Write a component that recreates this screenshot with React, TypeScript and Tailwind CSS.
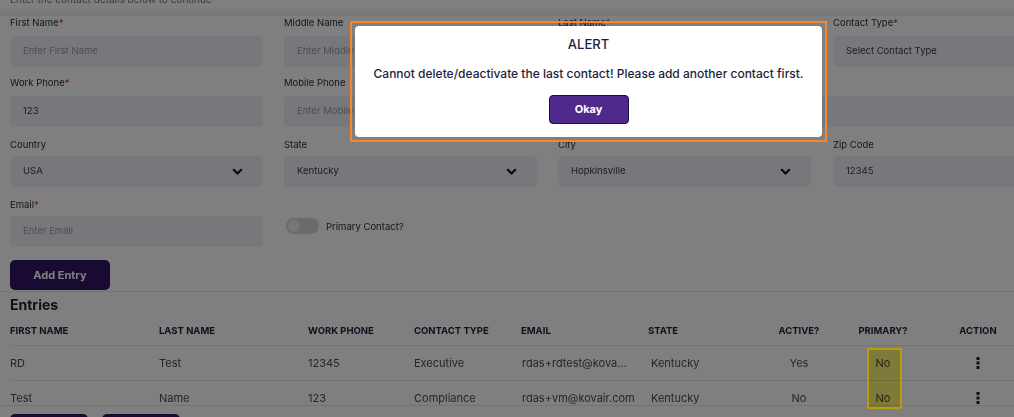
import React from "react";

const Chevron = () => (
  <svg width="11" height="8" viewBox="0 0 11 8" className="shrink-0">
    <path d="M1.8 1.8l3.7 3.7 3.7-3.7" fill="none" stroke="#111" strokeWidth="2.2" strokeLinecap="round" strokeLinejoin="round" />
  </svg>
);

const Dots = () => (
  <svg width="4" height="12" viewBox="0 0 4 12">
    <rect x="0.5" y="0" width="3" height="3" fill="#1e1e3c" />
    <rect x="0.5" y="4.5" width="3" height="3" fill="#1e1e3c" />
    <rect x="0.5" y="9" width="3" height="3" fill="#1e1e3c" />
  </svg>
);

function Label({ text, req }: { text: string; req?: boolean }) {
  return (
    <div className="h-[14px] leading-[14px] text-[9.5px] text-[#2b2b3b] mb-[6px] whitespace-nowrap">
      {text}
      {req && <span className="text-[#d0242b]">*</span>}
    </div>
  );
}

function Input({ ph, value }: { ph?: string; value?: string }) {
  return (
    <div className="h-[31px] rounded-[5px] bg-[#eef0f8] flex items-center pl-[13px] text-[9.5px]">
      {value ? <span className="text-[#3a3a48]">{value}</span> : <span className="text-[#9a9aaa]">{ph}</span>}
    </div>
  );
}

function Select({ value }: { value: string }) {
  return (
    <div className="h-[31px] rounded-[5px] bg-[#eef0f8] flex items-center justify-between pl-[13px] pr-[20px] text-[9.5px]">
      <span className="text-[#3a3a48]">{value}</span>
      <Chevron />
    </div>
  );
}

const cols = "grid grid-cols-[149px_149px_106px_107px_127px_112px_78px_90px_100px]";

const rows = [
  ["RD", "Test", "12345", "Executive", "rdas+rdtest@kova...", "Kentucky", "Yes", "No"],
  ["Test", "Name", "123", "Compliance", "rdas+vm@kovair.com", "Kentucky", "No", "No"],
];

export default function App() {
  return (
    <div className="relative w-[1014px] h-[417px] overflow-hidden bg-white font-['Inter',sans-serif] flex flex-col">
      <div className="flex-1 min-h-0 overflow-hidden">
        <div className="h-[9px] overflow-hidden">
          <p className="text-[10px] leading-[12px] text-[#777] -mt-[7px] px-[10px] whitespace-nowrap">
            Enter the contact details below to continue
          </p>
        </div>
        <div className="h-[7px] bg-[#f3f4f9]" />
        <div className="px-[10px] w-[1100px]">
          <div className="grid grid-cols-[253px_253px_253px_253px] gap-x-[21px] gap-y-[9px]">
            <div>
              <Label text="First Name" req />
              <Input ph="Enter First Name" />
            </div>
            <div>
              <Label text="Middle Name" />
              <Input ph="Enter Middle Name" />
            </div>
            <div>
              <Label text="Last Name" req />
              <Input ph="Enter Last Name" />
            </div>
            <div className="pl-[1px]">
              <Label text="Contact Type" req />
              <Input value="Select Contact Type" />
            </div>

            <div>
              <Label text="Work Phone" req />
              <Input value="123" />
            </div>
            <div>
              <Label text="Mobile Phone" />
              <Input ph="Enter Mobile Phone" />
            </div>
            <div className="col-span-2">
              <Label text="" />
              <div className="h-[31px] bg-[#eef0f8]" />
            </div>

            <div>
              <div className="pt-[2px]">
                <Label text="Country" />
              </div>
              <div className="-mt-[2px]">
                <Select value="USA" />
              </div>
            </div>
            <div>
              <div className="pt-[2px]">
                <Label text="State" />
              </div>
              <div className="-mt-[2px]">
                <Select value="Kentucky" />
              </div>
            </div>
            <div>
              <div className="pt-[2px]">
                <Label text="City" />
              </div>
              <div className="-mt-[2px]">
                <Select value="Hopkinsville" />
              </div>
            </div>
            <div className="pl-[1px]">
              <div className="pt-[2px]">
                <Label text="Zip Code" />
              </div>
              <div className="-mt-[2px]">
                <Input value="12345" />
              </div>
            </div>

            <div>
              <div className="pt-[2px]">
                <Label text="Email" req />
              </div>
              <div className="-mt-[2px]">
                <Input ph="Enter Email" />
              </div>
            </div>
            <div className="pt-[22px] pl-[2px] flex items-start gap-[7px]">
              <div className="w-[33px] h-[16px] rounded-full bg-[#d6d6d8] flex items-center pl-[2px]">
                <div className="w-[12px] h-[12px] rounded-full bg-[#efefef]" />
              </div>
              <span className="text-[9.5px] leading-[17px] text-[#2b2b3b]">Primary Contact?</span>
            </div>
          </div>

          <button className="mt-[13px] w-[100px] h-[30px] rounded-[5px] bg-[#331466] text-white text-[11px] font-bold">
            Add Entry
          </button>
        </div>

        <div className="mt-[1px] border-t border-[#e6e7ee] w-[1100px]">
          <div className="px-[10px] h-[25px] flex items-center text-[14px] font-bold text-[#1e1e2e]">Entries</div>
          <div className="pl-[10px]">
            <div className={`${cols} h-[29px] border-b border-[#e4e5ee] items-center text-[9.5px] font-bold text-[#1e1e3c] w-[1100px]`}>
              <div>FIRST NAME</div>
              <div>LAST NAME</div>
              <div>WORK PHONE</div>
              <div>CONTACT TYPE</div>
              <div>EMAIL</div>
              <div>STATE</div>
              <div className="text-center">ACTIVE?</div>
              <div className="text-center">PRIMARY?</div>
              <div className="text-center">ACTION</div>
            </div>
            {rows.map((r, i) => (
              <div
                key={i}
                className={`${cols} h-[35px] border-b border-[#e4e5ee] items-center text-[11px] text-[#4a4a58] w-[1100px]`}
              >
                <div>{r[0]}</div>
                <div>{r[1]}</div>
                <div>{r[2]}</div>
                <div>{r[3]}</div>
                <div className="pl-[1px]">{r[4]}</div>
                <div className="pl-[3px]">{r[5]}</div>
                <div className="text-center">{r[6]}</div>
                <div className="text-center">{r[7]}</div>
                <div className="flex justify-center">
                  <Dots />
                </div>
              </div>
            ))}
          </div>
        </div>
      </div>

      <div className="h-[12px] shrink-0 border-t border-[#e6e7ee] bg-white px-[10px] pt-[8px] flex gap-[14px] overflow-hidden">
        <div className="w-[78px] h-[30px] rounded-[5px] bg-[#331466] shrink-0" />
        <div className="w-[78px] h-[30px] rounded-[5px] bg-[#331466] shrink-0" />
      </div>

      <div className="absolute left-[867px] top-[348px] w-[35px] h-[61px] bg-[#faf474] mix-blend-multiply" />

      <div className="absolute inset-0 bg-black/50" />

      <div className="absolute left-[350px] top-[21px] w-[477px] h-[121px] border-2 border-[#f5862b] p-[3px]">
        <div className="w-full h-full bg-white rounded-[4px] flex flex-col items-center pt-[10px]">
          <div className="text-[13px] leading-[16px] font-medium text-[#1e1e3c]">ALERT</div>
          <div className="mt-[14px] text-[12px] leading-[16px] font-medium text-[#1e1e3c] whitespace-nowrap">
            Cannot delete/deactivate the last contact! Please add another contact first.
          </div>
          <button className="mt-[13px] w-[80px] h-[29px] rounded-[4px] bg-[#4f2a8c] border border-[#1f0d40] text-white text-[11px] font-bold">
            Okay
          </button>
        </div>
      </div>

      <div className="absolute left-[867px] top-[348px] w-[35px] h-[61px] border-2 border-[rgba(190,160,10,0.9)]" />
    </div>
  );
}
